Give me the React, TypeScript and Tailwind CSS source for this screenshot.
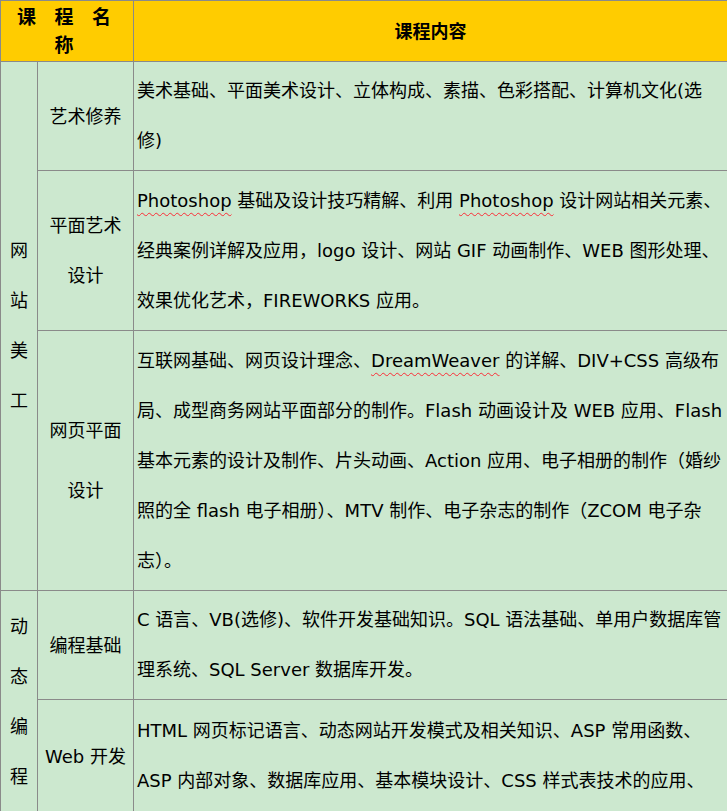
const font = { fontFamily: '"DejaVu Sans", "Noto Sans CJK SC", sans-serif' }

function Sq({ children }: { children: React.ReactNode }) {
  return <span className="underline decoration-wavy decoration-red-500 decoration-1 underline-offset-[5px]">{children}</span>
}

const td = 'border border-[#8a8a8a] bg-[#cce8cf] align-middle'
const content = `${td} pl-[3px] pr-0 py-[4px] text-left leading-[50px] text-[18px] text-black`

export default function App() {
  return (
    <div className="h-[811px] w-[727px] overflow-hidden bg-white" style={font}>
      <table className="w-[727px] table-fixed border-collapse">
        <colgroup>
          <col className="w-[37px]" />
          <col className="w-[96px]" />
          <col className="w-[594px]" />
        </colgroup>
        <thead>
          <tr className="h-[61px]">
            <th colSpan={2} className="border border-[#8a8a8a] bg-[#ffcc00] text-[19px] font-bold text-black">
              <span className="tracking-[6px]">课 程 名 称</span>
            </th>
            <th className="border border-[#8a8a8a] bg-[#ffcc00] text-[18px] font-bold text-black">课程内容</th>
          </tr>
        </thead>
        <tbody className="text-[18px] text-black">
          <tr className="h-[109px]">
            <td rowSpan={3} className={`${td} text-center leading-[50px]`}>网<br />站<br />美<br />工</td>
            <td className={`${td} text-center`}>艺术修养</td>
            <td className={content}>美术基础、平面美术设计、立体构成、素描、色彩搭配、计算机文化(选修)</td>
          </tr>
          <tr className="h-[160px]">
            <td className={`${td} text-center leading-[50px]`}>平面艺术<br />设计</td>
            <td className={content}><Sq>Photoshop</Sq> 基础及设计技巧精解、利用 <Sq>Photoshop</Sq> 设计网站相关元素、经典案例详解及应用，logo 设计、网站 GIF 动画制作、WEB 图形处理、效果优化艺术，FIREWORKS 应用。</td>
          </tr>
          <tr className="h-[260px]">
            <td className={`${td} text-center leading-[60px]`}>网页平面<br />设计</td>
            <td className={content}>互联网基础、网页设计理念、<Sq>DreamWeaver</Sq> 的详解、DIV+CSS 高级布局、成型商务网站平面部分的制作。Flash 动画设计及 WEB 应用、Flash 基本元素的设计及制作、片头动画、Action 应用、电子相册的制作（婚纱照的全 flash 电子相册）、MTV 制作、电子杂志的制作（ZCOM 电子杂志）。</td>
          </tr>
          <tr className="h-[108px]">
            <td rowSpan={2} className={`${td} text-center leading-[50px]`}>动<br />态<br />编<br />程</td>
            <td className={`${td} text-center`}>编程基础</td>
            <td className={content}>C 语言、VB(选修)、软件开发基础知识。SQL 语法基础、单用户数据库管理系统、SQL Server 数据库开发。</td>
          </tr>
          <tr className="h-[113px]">
            <td className={`${td} text-center`}>Web 开发</td>
            <td className={content}>HTML 网页标记语言、动态网站开发模式及相关知识、ASP 常用函数、ASP 内部对象、数据库应用、基本模块设计、CSS 样式表技术的应用、</td>
          </tr>
        </tbody>
      </table>
    </div>
  )
}
